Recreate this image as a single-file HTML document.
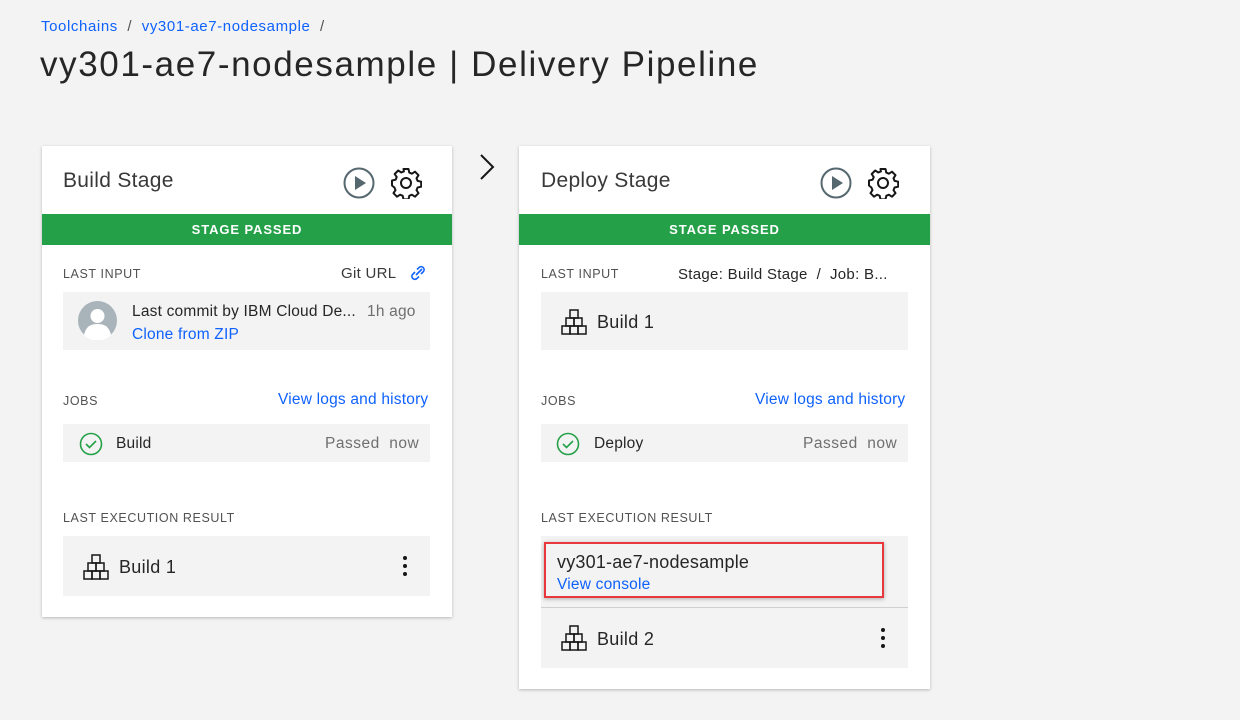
<!DOCTYPE html>
<html><head><meta charset="utf-8"><style>
*{box-sizing:border-box;margin:0;padding:0}
body{width:1240px;height:720px;background:#f3f3f3;font-family:"Liberation Sans",sans-serif;color:#161616;position:relative;overflow:hidden}
.a{position:absolute}
.card{position:absolute;background:#fff;box-shadow:0 1px 3px rgba(0,0,0,.25)}
.ttl{font-size:21px;color:#393939;letter-spacing:.3px}
.bar{position:absolute;left:0;right:0;top:68px;height:31px;background:#24a148;color:#fff;font-weight:bold;font-size:13px;letter-spacing:.9px;text-align:center;line-height:31px}
.lbl{font-size:12.5px;color:#525252;letter-spacing:.6px}
.box{position:absolute;background:#f3f3f3;left:21px;width:367px}
.link{color:#0f62fe}
.t15{font-size:15.5px;letter-spacing:.2px}
.gray{color:#6f6f6f}
</style></head><body>
<div class="a" style="left:41px;top:18px;font-size:15px;letter-spacing:.6px"><span class="link">Toolchains</span><span style="color:#525252">&nbsp;&nbsp;/&nbsp;&nbsp;</span><span class="link">vy301-ae7-nodesample</span><span style="color:#525252">&nbsp;&nbsp;/</span></div>
<div class="a" style="left:40px;top:45px;font-size:35px;color:#262626;letter-spacing:1.6px">vy301-ae7-nodesample | Delivery Pipeline</div>

<svg class="a" style="left:476px;top:152px" width="22" height="30"><path d="M5 3 L17 15 L5 27" fill="none" stroke="#161616" stroke-width="2"/></svg>

<!-- card 1 -->
<div class="card" style="left:42px;top:146px;width:410px;height:471px">
 <div class="a ttl" style="left:21px;top:23px">Build Stage</div>
 <svg class="a" style="left:301px;top:21px" width="32" height="32"><circle cx="16" cy="16" r="14.5" fill="none" stroke="#55676f" stroke-width="2"/><path d="M12 9 L23 16 L12 23Z" fill="#55676f"/></svg>
 <svg class="a" style="left:348px;top:21px" width="32" height="32" viewBox="0 0 32 32"><path d="M13.5 2h5l.8 3.6 2.6 1.1 3.1-2 3.5 3.5-2 3.1 1.1 2.6 3.6.8v5l-3.6.8-1.1 2.6 2 3.1-3.5 3.5-3.1-2-2.6 1.1-.8 3.6h-5l-.8-3.6-2.6-1.1-3.1 2-3.5-3.5 2-3.1-1.1-2.6L2 18.5v-5l3.6-.8 1.1-2.6-2-3.1 3.5-3.5 3.1 2 2.6-1.1z" fill="none" stroke="#161616" stroke-width="2" stroke-linejoin="round"/><circle cx="16" cy="16" r="5" fill="none" stroke="#161616" stroke-width="2"/></svg>
 <div class="bar">STAGE PASSED</div>
 <div class="a lbl" style="left:21px;top:121px">LAST INPUT</div>
 <div class="a" style="left:299px;top:119px;font-size:15px;color:#393939;letter-spacing:.3px">Git URL</div>
 <svg class="a" style="left:366px;top:117px" width="22" height="20"><path d="M8 12l6-6M7 9l-2.5 2.5a3 3 0 0 0 4.2 4.2L11 13.5M13 11l2.5-2.5a3 3 0 0 0-4.2-4.2L9 6.5" fill="none" stroke="#0f62fe" stroke-width="1.6"/></svg>
 <div class="box" style="top:146px;height:58px">
  <svg class="a" style="left:15px;top:9px" width="39" height="39"><circle cx="19.5" cy="19.5" r="19.5" fill="#a8b3ba"/><circle cx="19.5" cy="15" r="7" fill="#fff"/><path d="M6 34c2-9 7-11 13.5-11S31 25 33 34a19 19 0 0 1-27 0z" fill="#fff"/></svg>
  <div class="a t15" style="left:69px;top:11px;color:#262626">Last commit by IBM Cloud De...</div>
  <div class="a t15 gray" style="left:304px;top:11px">1h ago</div>
  <div class="a t15 link" style="left:69px;top:34px">Clone from ZIP</div>
 </div>
 <div class="a lbl" style="left:21px;top:248px">JOBS</div>
 <div class="a t15 link" style="left:236px;top:245px">View logs and history</div>
 <div class="box" style="top:278px;height:38px">
  <svg class="a" style="left:16px;top:8px" width="24" height="24"><circle cx="12" cy="12" r="10.5" fill="none" stroke="#24a148" stroke-width="1.6"/><path d="M7 12l3.5 3.5L17 9" fill="none" stroke="#24a148" stroke-width="1.6"/></svg>
  <div class="a t15" style="left:53px;top:11px;color:#262626">Build</div>
  <div class="a t15 gray" style="left:262px;top:11px;letter-spacing:.5px">Passed&nbsp; now</div>
 </div>
 <div class="a lbl" style="left:21px;top:365px">LAST EXECUTION RESULT</div>
 <div class="box" style="top:390px;height:60px">
  <svg class="a" style="left:20px;top:18px" width="26" height="26" viewBox="0 0 26 26"><g fill="none" stroke="#161616" stroke-width="1.5"><rect x="9" y="1" width="8" height="8"/><rect x="5" y="9" width="8" height="8"/><rect x="13" y="9" width="8" height="8"/><rect x="1" y="17" width="8" height="8"/><rect x="9" y="17" width="8" height="8"/><rect x="17" y="17" width="8" height="8"/></g></svg>
  <div class="a" style="left:56px;top:21px;font-size:18px;color:#262626;letter-spacing:.3px">Build 1</div>
  <svg class="a" style="left:338px;top:18px" width="8" height="24"><circle cx="4" cy="4" r="2" fill="#161616"/><circle cx="4" cy="12" r="2" fill="#161616"/><circle cx="4" cy="20" r="2" fill="#161616"/></svg>
 </div>
</div>

<!-- card 2 -->
<div class="card" style="left:519px;top:146px;width:411px;height:543px">
 <div class="a ttl" style="left:22px;top:23px">Deploy Stage</div>
 <svg class="a" style="left:301px;top:21px" width="32" height="32"><circle cx="16" cy="16" r="14.5" fill="none" stroke="#55676f" stroke-width="2"/><path d="M12 9 L23 16 L12 23Z" fill="#55676f"/></svg>
 <svg class="a" style="left:348px;top:21px" width="32" height="32" viewBox="0 0 32 32"><path d="M13.5 2h5l.8 3.6 2.6 1.1 3.1-2 3.5 3.5-2 3.1 1.1 2.6 3.6.8v5l-3.6.8-1.1 2.6 2 3.1-3.5 3.5-3.1-2-2.6 1.1-.8 3.6h-5l-.8-3.6-2.6-1.1-3.1 2-3.5-3.5 2-3.1-1.1-2.6L2 18.5v-5l3.6-.8 1.1-2.6-2-3.1 3.5-3.5 3.1 2 2.6-1.1z" fill="none" stroke="#161616" stroke-width="2" stroke-linejoin="round"/><circle cx="16" cy="16" r="5" fill="none" stroke="#161616" stroke-width="2"/></svg>
 <div class="bar">STAGE PASSED</div>
 <div class="a lbl" style="left:22px;top:121px">LAST INPUT</div>
 <div class="a" style="left:159px;top:120px;font-size:15px;color:#262626;letter-spacing:.3px">Stage: Build Stage &nbsp;/&nbsp; Job: B...</div>
 <div class="box" style="top:146px;height:58px;left:22px">
  <svg class="a" style="left:20px;top:17px" width="26" height="26" viewBox="0 0 26 26"><g fill="none" stroke="#161616" stroke-width="1.5"><rect x="9" y="1" width="8" height="8"/><rect x="5" y="9" width="8" height="8"/><rect x="13" y="9" width="8" height="8"/><rect x="1" y="17" width="8" height="8"/><rect x="9" y="17" width="8" height="8"/><rect x="17" y="17" width="8" height="8"/></g></svg>
  <div class="a" style="left:56px;top:20px;font-size:18px;color:#262626;letter-spacing:.3px">Build 1</div>
 </div>
 <div class="a lbl" style="left:22px;top:248px">JOBS</div>
 <div class="a t15 link" style="left:236px;top:245px">View logs and history</div>
 <div class="box" style="top:278px;height:38px;left:22px">
  <svg class="a" style="left:15px;top:8px" width="24" height="24"><circle cx="12" cy="12" r="10.5" fill="none" stroke="#24a148" stroke-width="1.6"/><path d="M7 12l3.5 3.5L17 9" fill="none" stroke="#24a148" stroke-width="1.6"/></svg>
  <div class="a t15" style="left:53px;top:11px;color:#262626">Deploy</div>
  <div class="a t15 gray" style="left:262px;top:11px;letter-spacing:.5px">Passed&nbsp; now</div>
 </div>
 <div class="a lbl" style="left:22px;top:365px">LAST EXECUTION RESULT</div>
 <div class="box" style="top:390px;height:132px;left:22px">
  <div class="a" style="left:3px;top:6px;width:340px;height:56px;border:2px solid #e8383d;box-shadow:0 1px 4px rgba(0,0,0,.3)"></div>
  <div class="a" style="left:16px;top:16px;font-size:18px;color:#262626;letter-spacing:.2px">vy301-ae7-nodesample</div>
  <div class="a t15 link" style="left:16px;top:40px">View console</div>
  <div class="a" style="left:0;right:0;top:71px;height:1px;background:#d0d0d0"></div>
  <svg class="a" style="left:20px;top:89px" width="26" height="26" viewBox="0 0 26 26"><g fill="none" stroke="#161616" stroke-width="1.5"><rect x="9" y="1" width="8" height="8"/><rect x="5" y="9" width="8" height="8"/><rect x="13" y="9" width="8" height="8"/><rect x="1" y="17" width="8" height="8"/><rect x="9" y="17" width="8" height="8"/><rect x="17" y="17" width="8" height="8"/></g></svg>
  <div class="a" style="left:56px;top:93px;font-size:18px;color:#262626;letter-spacing:.3px">Build 2</div>
  <svg class="a" style="left:338px;top:90px" width="8" height="24"><circle cx="4" cy="4" r="2" fill="#161616"/><circle cx="4" cy="12" r="2" fill="#161616"/><circle cx="4" cy="20" r="2" fill="#161616"/></svg>
 </div>
</div>
</body></html>
